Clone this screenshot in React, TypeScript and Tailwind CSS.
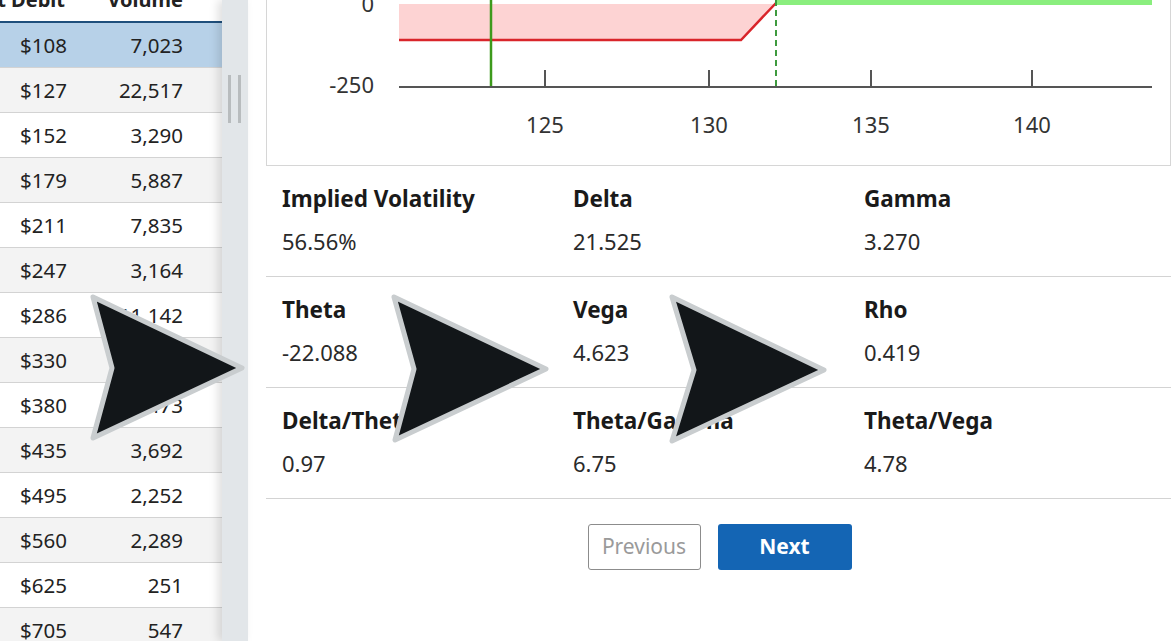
import React from 'react';

const rows = [
  { debit: '$108', volume: '7,023' },
  { debit: '$127', volume: '22,517' },
  { debit: '$152', volume: '3,290' },
  { debit: '$179', volume: '5,887' },
  { debit: '$211', volume: '7,835' },
  { debit: '$247', volume: '3,164' },
  { debit: '$286', volume: '11,142' },
  { debit: '$330', volume: '6,408' },
  { debit: '$380', volume: '4,473' },
  { debit: '$435', volume: '3,692' },
  { debit: '$495', volume: '2,252' },
  { debit: '$560', volume: '2,289' },
  { debit: '$625', volume: '251' },
  { debit: '$705', volume: '547' },
];

const stats = [
  [
    { label: 'Implied Volatility', value: '56.56%' },
    { label: 'Delta', value: '21.525' },
    { label: 'Gamma', value: '3.270' },
  ],
  [
    { label: 'Theta', value: '-22.088' },
    { label: 'Vega', value: '4.623' },
    { label: 'Rho', value: '0.419' },
  ],
  [
    { label: 'Delta/Theta', value: '0.97' },
    { label: 'Theta/Gamma', value: '6.75' },
    { label: 'Theta/Vega', value: '4.78' },
  ],
];

const font = { fontFamily: '"Noto Sans", "Open Sans", sans-serif' };

function PayoffChart() {
  // drawn in page coordinates, shifted into the box
  const ticks = [
    { x: 545, label: '125' },
    { x: 709, label: '130' },
    { x: 871, label: '135' },
    { x: 1032, label: '140' },
  ];
  return (
    <svg width="903" height="205" className="block">
      <g transform="translate(-267, 39)" style={font}>
        <polygon points="399,4 776,4 741,40 399,40" fill="#fdd3d3" />
        <rect x="776" y="-6" width="376" height="11" fill="#8aee7e" />
        <polyline points="399,40 741,40 776,3" fill="none" stroke="#d9252b" strokeWidth="2.5" />
        <line x1="491" y1="-40" x2="491" y2="87" stroke="#3d9a1c" strokeWidth="2.5" />
        <line x1="776" y1="0" x2="776" y2="87" stroke="#3e9a3e" strokeWidth="2" strokeDasharray="6 4" />
        <line x1="399" y1="87" x2="1152" y2="87" stroke="#555" strokeWidth="2" />
        {ticks.map(t => (
          <g key={t.x}>
            <line x1={t.x} y1="70" x2={t.x} y2="87" stroke="#555" strokeWidth="2" />
            <text x={t.x} y="133" textAnchor="middle" fontSize="22" fill="#333">{t.label}</text>
          </g>
        ))}
        <text x="374" y="12" textAnchor="end" fontSize="22" fill="#333">0</text>
        <text x="374" y="93" textAnchor="end" fontSize="22" fill="#333">-250</text>
      </g>
    </svg>
  );
}

function Arrows() {
  const arrows = [
    '93,297 242,368 93,438 112,368',
    '394,297 546,369 395,440 414,369',
    '672,297 824,370 672,441 694,370',
  ];
  return (
    <svg width="1174" height="641" className="absolute inset-0 pointer-events-none z-20">
      {arrows.map(p => (
        <polygon key={p} points={p} fill="#121619" stroke="#c9cdcf" strokeWidth="5" strokeLinejoin="round" />
      ))}
    </svg>
  );
}

export default function App() {
  return (
    <div className="relative flex h-[641px] w-[1174px] overflow-hidden bg-white text-[#222]" style={font}>
      {/* Strategy table */}
      <div className="w-[222px] shrink-0">
        <div className="flex items-center justify-between h-[44px] mt-[-21px] pr-[39px] border-b-2 border-[#1f4f7c] font-bold text-[20px]">
          <span className="-ml-[31px]">Net Debit</span>
          <span>Volume</span>
        </div>
        {rows.map((r, i) => (
          <div
            key={r.debit}
            className={`flex items-center justify-between h-[45px] pl-[20px] pr-[39px] border-b border-[#d3d3d3] text-[20.5px] ${
              i === 0 ? 'bg-[#b7d1e8]' : i % 2 === 1 ? 'bg-[#f3f3f3]' : 'bg-white'
            }`}
          >
            <span>{r.debit}</span>
            <span>{r.volume}</span>
          </div>
        ))}
      </div>

      {/* Splitter */}
      <div className="relative z-10 w-[26px] shrink-0 bg-[#e2e6e9] shadow-[-4px_0_10px_rgba(0,0,0,0.13)] flex gap-[7px] pl-[6px] pt-[75px]">
        <div className="w-[3px] h-[48px] bg-[#b8bcbe]" />
        <div className="w-[3px] h-[48px] bg-[#b8bcbe]" />
      </div>

      {/* Detail panel */}
      <div className="flex-1 pl-[18px] pr-[4px]">
        <div className="mt-[-40px] h-[206px] border border-[#d6d6d6] overflow-hidden">
          <PayoffChart />
        </div>

        {stats.map((row, ri) => (
          <div key={ri} className="grid grid-cols-3 px-4 pt-[19px] pb-[21px] border-b border-[#d3d3d3]">
            {row.map(s => (
              <div key={s.label} className="flex flex-col gap-[14px]">
                <div className="h-[28px] leading-[28px] font-bold text-[22.5px] text-[#1a1a1a]">{s.label}</div>
                <div className="h-[28px] leading-[28px] text-[22px] text-[#2a2a2a]">{s.value}</div>
              </div>
            ))}
          </div>
        ))}

        <div className="flex justify-center gap-[17px] mt-[25px] pl-[2px]">
          <button className="h-[46px] w-[113px] rounded-[3px] border border-[#8c8c8c] bg-white text-[21px] text-[#9a9a9a]">
            Previous
          </button>
          <button className="h-[46px] w-[134px] rounded-[3px] bg-[#1465b4] text-[21px] font-bold text-white">
            Next
          </button>
        </div>
      </div>

      <Arrows />
    </div>
  );
}
